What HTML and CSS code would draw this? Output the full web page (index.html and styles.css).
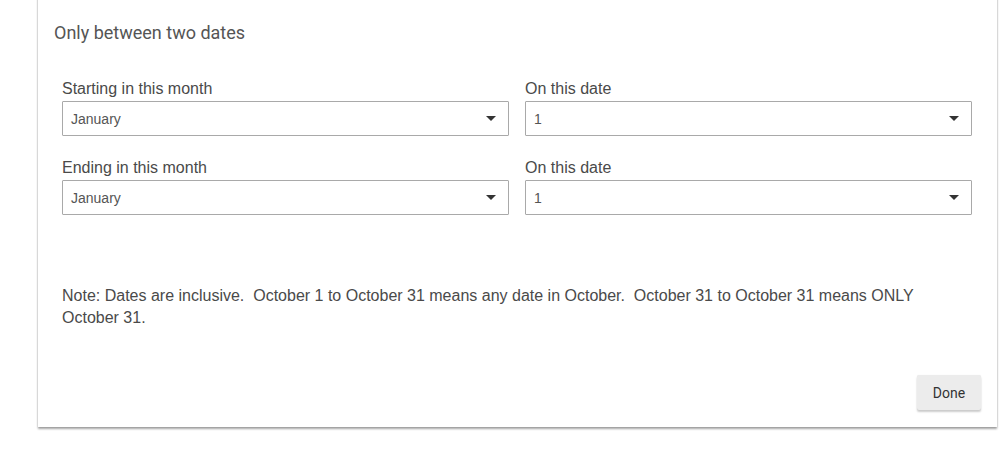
FILE: index.html
```html
<!DOCTYPE html>
<html>
<head>
<meta charset="utf-8">
<link rel="stylesheet" href="styles.css">
</head>
<body>
<div class="card">
  <h2 class="title">Only between two dates</h2>
  <div class="fields">
    <div class="field">
      <label class="label">Starting in this month</label>
      <div class="select"><span>January</span><span class="arrow"></span></div>
    </div>
    <div class="field">
      <label class="label">On this date</label>
      <div class="select"><span>1</span><span class="arrow"></span></div>
    </div>
    <div class="field">
      <label class="label">Ending in this month</label>
      <div class="select"><span>January</span><span class="arrow"></span></div>
    </div>
    <div class="field">
      <label class="label">On this date</label>
      <div class="select"><span>1</span><span class="arrow"></span></div>
    </div>
  </div>
  <p class="note">Note: Dates are inclusive.&nbsp; October 1 to October 31 means any date in October.&nbsp; October 31 to October 31 means ONLY October 31.</p>
  <div class="actions">
    <button class="btn">Done</button>
  </div>
</div>
</body>
</html>
```
FILE: styles.css
```css
html, body {
  margin: 0;
  padding: 0;
  background: #fff;
}
body {
  font-family: "Liberation Sans", Arial, sans-serif;
  min-height: 451px;
  padding-top: 1px;
  box-sizing: border-box;
}
.card {
  margin: -21px 0 0 38px;
  width: 959px;
  box-sizing: border-box;
  padding: 43px 16px 17px 16px;
  background: #fff;
  box-shadow: 0 2px 2px rgba(0,0,0,0.35), 0 0 2px rgba(0,0,0,0.15);
}
.title {
  margin: 0;
  font-family: Roboto, "Liberation Sans", sans-serif;
  font-weight: 400;
  font-size: 18px;
  line-height: 20px;
  color: #555;
}
.fields {
  margin: 37px 9px 0 8px;
  display: grid;
  grid-template-columns: 1fr 1fr;
  column-gap: 16px;
  row-gap: 23px;
}
.field {
  display: flex;
  flex-direction: column;
}
.label {
  font-size: 16px;
  line-height: 18px;
  color: #4a4a4a;
  margin-bottom: 3px;
}
.select {
  height: 35px;
  box-sizing: border-box;
  border: 1px solid #a9a9a9;
  border-radius: 1px;
  display: flex;
  align-items: center;
  justify-content: space-between;
  padding: 0 12px 0 8px;
  font-size: 14px;
  color: #555;
}
.arrow {
  width: 0;
  height: 0;
  border-left: 5px solid transparent;
  border-right: 5px solid transparent;
  border-top: 5px solid #333;
}
.note {
  margin: 70px 8px 0 8px;
  font-size: 16px;
  line-height: 22px;
  color: #4a4a4a;
}
.actions {
  margin-top: 46px;
  display: flex;
  justify-content: flex-end;
}
.btn {
  width: 64px;
  height: 35px;
  border: none;
  border-radius: 2px;
  background: #ececec;
  box-shadow: 0 2px 2px rgba(0,0,0,0.2), 0 0 1px rgba(0,0,0,0.1);
  font-family: Roboto, "Liberation Sans", sans-serif;
  font-weight: 400;
  font-size: 14px;
  color: #333;
  padding: 0;
}
```
